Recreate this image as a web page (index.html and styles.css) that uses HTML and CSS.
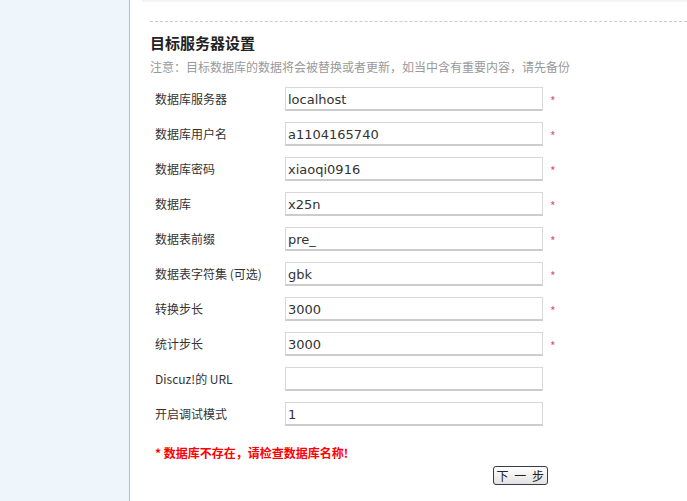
FILE: index.html
```html
<!DOCTYPE html>
<html lang="zh-CN">

<head>
    <meta charset="UTF-8">
    <title>目标服务器设置</title>
    <link rel="stylesheet" href="styles.css">
</head>

<body>
    <div class="page">
        <div class="side"></div>
        <div class="main">
            <div class="topline"></div>
            <div class="dash"></div>
            <h3>目标服务器设置</h3>
            <p class="tip">注意：目标数据库的数据将会被替换或者更新，如当中含有重要内容，请先备份</p>
            <table class="tb">
                <tr>
                    <th>数据库服务器</th>
                    <td><input type="text" value="localhost"></td>
                    <td class="req">*</td>
                </tr>
                <tr>
                    <th>数据库用户名</th>
                    <td><input type="text" value="a1104165740"></td>
                    <td class="req">*</td>
                </tr>
                <tr>
                    <th>数据库密码</th>
                    <td><input type="text" value="xiaoqi0916"></td>
                    <td class="req">*</td>
                </tr>
                <tr>
                    <th>数据库</th>
                    <td><input type="text" value="x25n"></td>
                    <td class="req">*</td>
                </tr>
                <tr>
                    <th>数据表前缀</th>
                    <td><input type="text" value="pre_"></td>
                    <td class="req">*</td>
                </tr>
                <tr>
                    <th>数据表字符集 (可选)</th>
                    <td><input type="text" value="gbk"></td>
                    <td class="req">*</td>
                </tr>
                <tr>
                    <th>转换步长</th>
                    <td><input type="text" value="3000"></td>
                    <td class="req">*</td>
                </tr>
                <tr>
                    <th>统计步长</th>
                    <td><input type="text" value="3000"></td>
                    <td class="req">*</td>
                </tr>
                <tr>
                    <th>Discuz!的 URL</th>
                    <td><input type="text" value=""></td>
                    <td></td>
                </tr>
                <tr>
                    <th>开启调试模式</th>
                    <td><input type="text" value="1"></td>
                    <td></td>
                </tr>
            </table>
            <p class="err">* 数据库不存在，请检查数据库名称!</p>
            <div class="btnbar">
                <button class="btn">下 一 步</button>
            </div>
        </div>
    </div>
</body>

</html>
```

FILE: styles.css
```css
html,
body {
    margin: 0;
    padding: 0;
    background: #fff;
}

body {
    font: 12px "Noto Sans CJK SC", "DejaVu Sans", sans-serif;
    color: #333;
}

.page {
    display: flex;
    height: 501px;
    overflow: hidden;
}

.side {
    width: 129px;
    flex: none;
    background: #eef5fb;
    border-right: 1px solid #a9c0d4;
}

.main {
    flex: 1;
    padding: 0 0 0 20px;
}

.topline {
    height: 2px;
    background: #f4f4f4;
    margin-left: -8px;
}

.dash {
    margin-top: 19px;
    border-top: 1px dashed #ccc;
}

h3 {
    margin: 11px 0 0;
    font-size: 15px;
    font-weight: bold;
    color: #222;
    line-height: 20px;
}

.tip {
    margin: 5px 0 0;
    color: #999;
    line-height: 18px;
}

.tb {
    border-collapse: collapse;
    margin-top: 11px;
}

.tb th {
    width: 125px;
    padding: 0 0 0 5px;
    text-align: left;
    font-weight: normal;
    height: 35px;
    vertical-align: top;
    line-height: 24px;
    color: #333;
}

.tb td {
    padding: 0 0 0 5px;
    height: 35px;
    vertical-align: top;
}

.tb input {
    width: 258px;
    height: 24px;
    box-sizing: border-box;
    margin: 0;
    padding: 2px 2px 0;
    border: 1px solid #d8d8d8;
    border-bottom: 2px solid #ccc;
    font: 13px "DejaVu Sans", sans-serif;
    color: #333;
    background: #fff;
}

.req {
    color: #e0557a;
    font-size: 12px;
    line-height: 28px;
}

.tb td.req {
    padding-left: 7px;
}

.err {
    margin: 7px 0 0 5px;
    color: #f00;
    font-weight: bold;
    line-height: 18px;
}

.btnbar {
    width: 398px;
    text-align: right;
    margin-top: 4px;
}

.btn {
    height: 19px;
    padding: 0 3px;
    font: 12px "Noto Sans CJK SC", sans-serif;
    line-height: 15px;
    word-spacing: 3px;
    color: #222;
    background: linear-gradient(#fff, #e2e2e2);
    border: 1px solid #333c4a;
    border-radius: 3px;
}
```
